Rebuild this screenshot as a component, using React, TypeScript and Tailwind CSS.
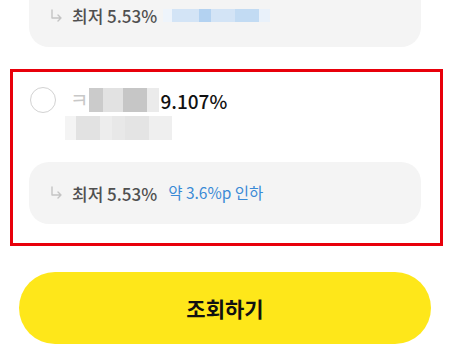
import React from "react";

const font = { fontFamily: '"Noto Sans CJK KR", "Noto Sans", sans-serif' };

function Arrow() {
  return (
    <svg width="13" height="14" viewBox="0 0 13 14" className="shrink-0">
      <path d="M2 1 V9 H11 M8 6 L11 9 L8 12" fill="none" stroke="#c4c4c4" strokeWidth="1.4" strokeLinecap="round" strokeLinejoin="round" />
    </svg>
  );
}

export default function App() {
  return (
    <div className="w-[450px] h-[362px] bg-white overflow-hidden" style={font}>
      {/* top cut-off card */}
      <div className="ml-[29px] w-[392px] h-[47px] bg-[#f4f4f4] rounded-b-[20px] flex items-start pl-[21px] pt-[7px]">
        <div className="flex items-center h-[17px]">
          <Arrow />
          <span className="ml-[9px] text-[17px] font-medium text-[#505050] leading-none">최저 5.53%</span>
          <div className="ml-[6px] flex h-[13px]">
            <div className="w-[9px] bg-[#eef4fb]" />
            <div className="w-[27px] bg-[#d3e4f6]" />
            <div className="w-[12px] bg-[#b3d2f1]" />
            <div className="w-[24px] bg-[#d3e4f6]" />
            <div className="w-[24px] bg-[#c2dbf3]" />
            <div className="w-[11px] bg-[#e9f1fa]" />
          </div>
        </div>
      </div>

      {/* selected card with red border */}
      <div className="mt-[22px] ml-[10px] w-[433px] border-[3px] border-[#e8000b] pt-[15px] pb-[19px]">
        <div className="flex items-start pl-[17px]">
          <div className="w-[26px] h-[26px] rounded-full border border-[#d2d2d2] shrink-0" />
          <div className="ml-[14px] pt-[1px]">
            <div className="flex items-center h-[24px]">
              <span className="text-[20px] text-[#c8c8c8] leading-none">ㅋ</span>
              <div className="ml-[1px] flex h-[24px]">
                <div className="w-[14px] bg-[#cbcbcb]" />
                <div className="w-[20px] bg-[#e2e2e2]" />
                <div className="w-[24px] bg-[#c6c6c6]" />
                <div className="w-[12px] bg-[#ebebeb]" />
              </div>
              <span className="ml-[1px] text-[19px] font-medium text-[#111] leading-none">9.107%</span>
            </div>
            <div className="mt-[4px] flex h-[24px] -ml-[5px]">
              <div className="w-[11px] bg-[#f4f4f4]" />
              <div className="w-[24px] bg-[#e2e2e2]" />
              <div className="w-[12px] bg-[#ededed]" />
              <div className="w-[13px] bg-[#e8e8e8]" />
              <div className="w-[24px] bg-[#e4e4e4]" />
              <div className="w-[23px] bg-[#efefef]" />
            </div>
          </div>
        </div>

        <div className="mt-[22px] ml-[16px] w-[392px] h-[62px] bg-[#f4f4f4] rounded-[20px] flex items-center pl-[21px]">
          <Arrow />
          <span className="ml-[9px] text-[17px] font-medium text-[#505050] leading-none">최저 5.53%</span>
          <span className="ml-[11px] text-[15.5px] text-[#3a8ad6] leading-none">약 3.6%p 인하</span>
        </div>
      </div>

      {/* button */}
      <div className="mt-[26px] ml-[19px] w-[412px] h-[72px] rounded-full bg-[#fee71a] flex items-center justify-center">
        <span className="text-[21px] font-bold text-[#111] leading-none">조회하기</span>
      </div>
    </div>
  );
}
